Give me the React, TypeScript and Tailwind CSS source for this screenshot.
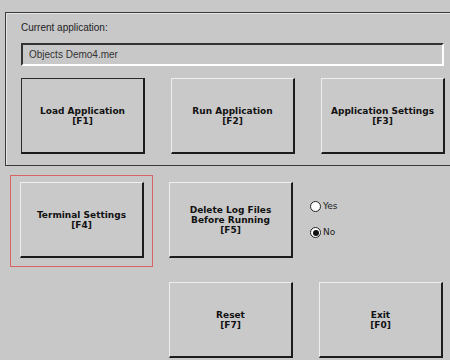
import React from "react";

const font = { fontFamily: '"DejaVu Sans", Verdana, sans-serif' };

function Key({ lines, dark }: { lines: string[]; dark?: boolean }) {
  return (
    <button
      className={
        "w-[124px] h-[76px] shrink-0 bg-[#c9c9c9] flex flex-col items-center justify-center border-b-2 border-r-2 border-b-[#1c1c1c] border-r-[#1c1c1c] text-[9px] font-bold leading-[10px] text-[#111] " +
        (dark
          ? "border-t border-l border-t-[#2a2a2a] border-l-[#2a2a2a]"
          : "border-t border-l border-t-[#eeeeee] border-l-[#eeeeee]")
      }
      style={font}
    >
      {lines.map((l) => (
        <span key={l}>{l}</span>
      ))}
    </button>
  );
}

function Radio({ label, checked }: { label: string; checked?: boolean }) {
  return (
    <label className="flex items-center gap-[2px] text-[9px] leading-[11px] h-[11px] text-[#222]" style={font}>
      <span className="w-[11px] h-[11px] rounded-full bg-white border border-[#222] flex items-center justify-center">
        {checked && <span className="w-[6px] h-[6px] rounded-full bg-[#111]" />}
      </span>
      {label}
    </label>
  );
}

export default function App() {
  return (
    <div className="w-[450px] h-[360px] overflow-hidden bg-[#c8c8c8] pt-[12px]">
      <div className="ml-[5px] h-[154px] border-t border-l border-b border-[#3a3a3a] shadow-[inset_1px_1px_0_#e6e6e6] pl-[15px] pt-[9px] flex flex-col">
        <div className="text-[10px] leading-[12px] text-[#222] h-[21px]" style={{ fontFamily: '"Liberation Sans", Arial, sans-serif' }}>
          Current application:
        </div>
        <div
          className="w-[423px] h-[23px] border-t-2 border-l-2 border-t-[#333] border-l-[#333] border-b-2 border-r-2 border-b-white border-r-white flex items-center pl-[6px] text-[10px] text-[#333]"
          style={{ fontFamily: '"Liberation Sans", Arial, sans-serif' }}
        >
          Objects Demo4.mer
        </div>
        <div className="flex gap-[26px] mt-[12px]">
          <Key lines={["Load Application", "[F1]"]} dark />
          <Key lines={["Run Application", "[F2]"]} />
          <Key lines={["Application Settings", "[F3]"]} />
        </div>
      </div>

      <div className="flex items-start mt-[9px]">
        <div className="ml-[10px] w-[143px] h-[92px] border border-[#d96464] pl-[9px] pt-[6px]">
          <Key lines={["Terminal Settings", "[F4]"]} />
        </div>
        <div className="ml-[16px] mt-[7px]">
          <Key lines={["Delete Log Files", "Before Running", "[F5]"]} />
        </div>
        <div className="ml-[17px] mt-[26px] flex flex-col gap-[15px]">
          <Radio label="Yes" />
          <Radio label="No" checked />
        </div>
      </div>

      <div className="flex gap-[26px] ml-[169px] mt-[15px]">
        <Key lines={["Reset", "[F7]"]} />
        <Key lines={["Exit", "[F0]"]} />
      </div>
    </div>
  );
}
